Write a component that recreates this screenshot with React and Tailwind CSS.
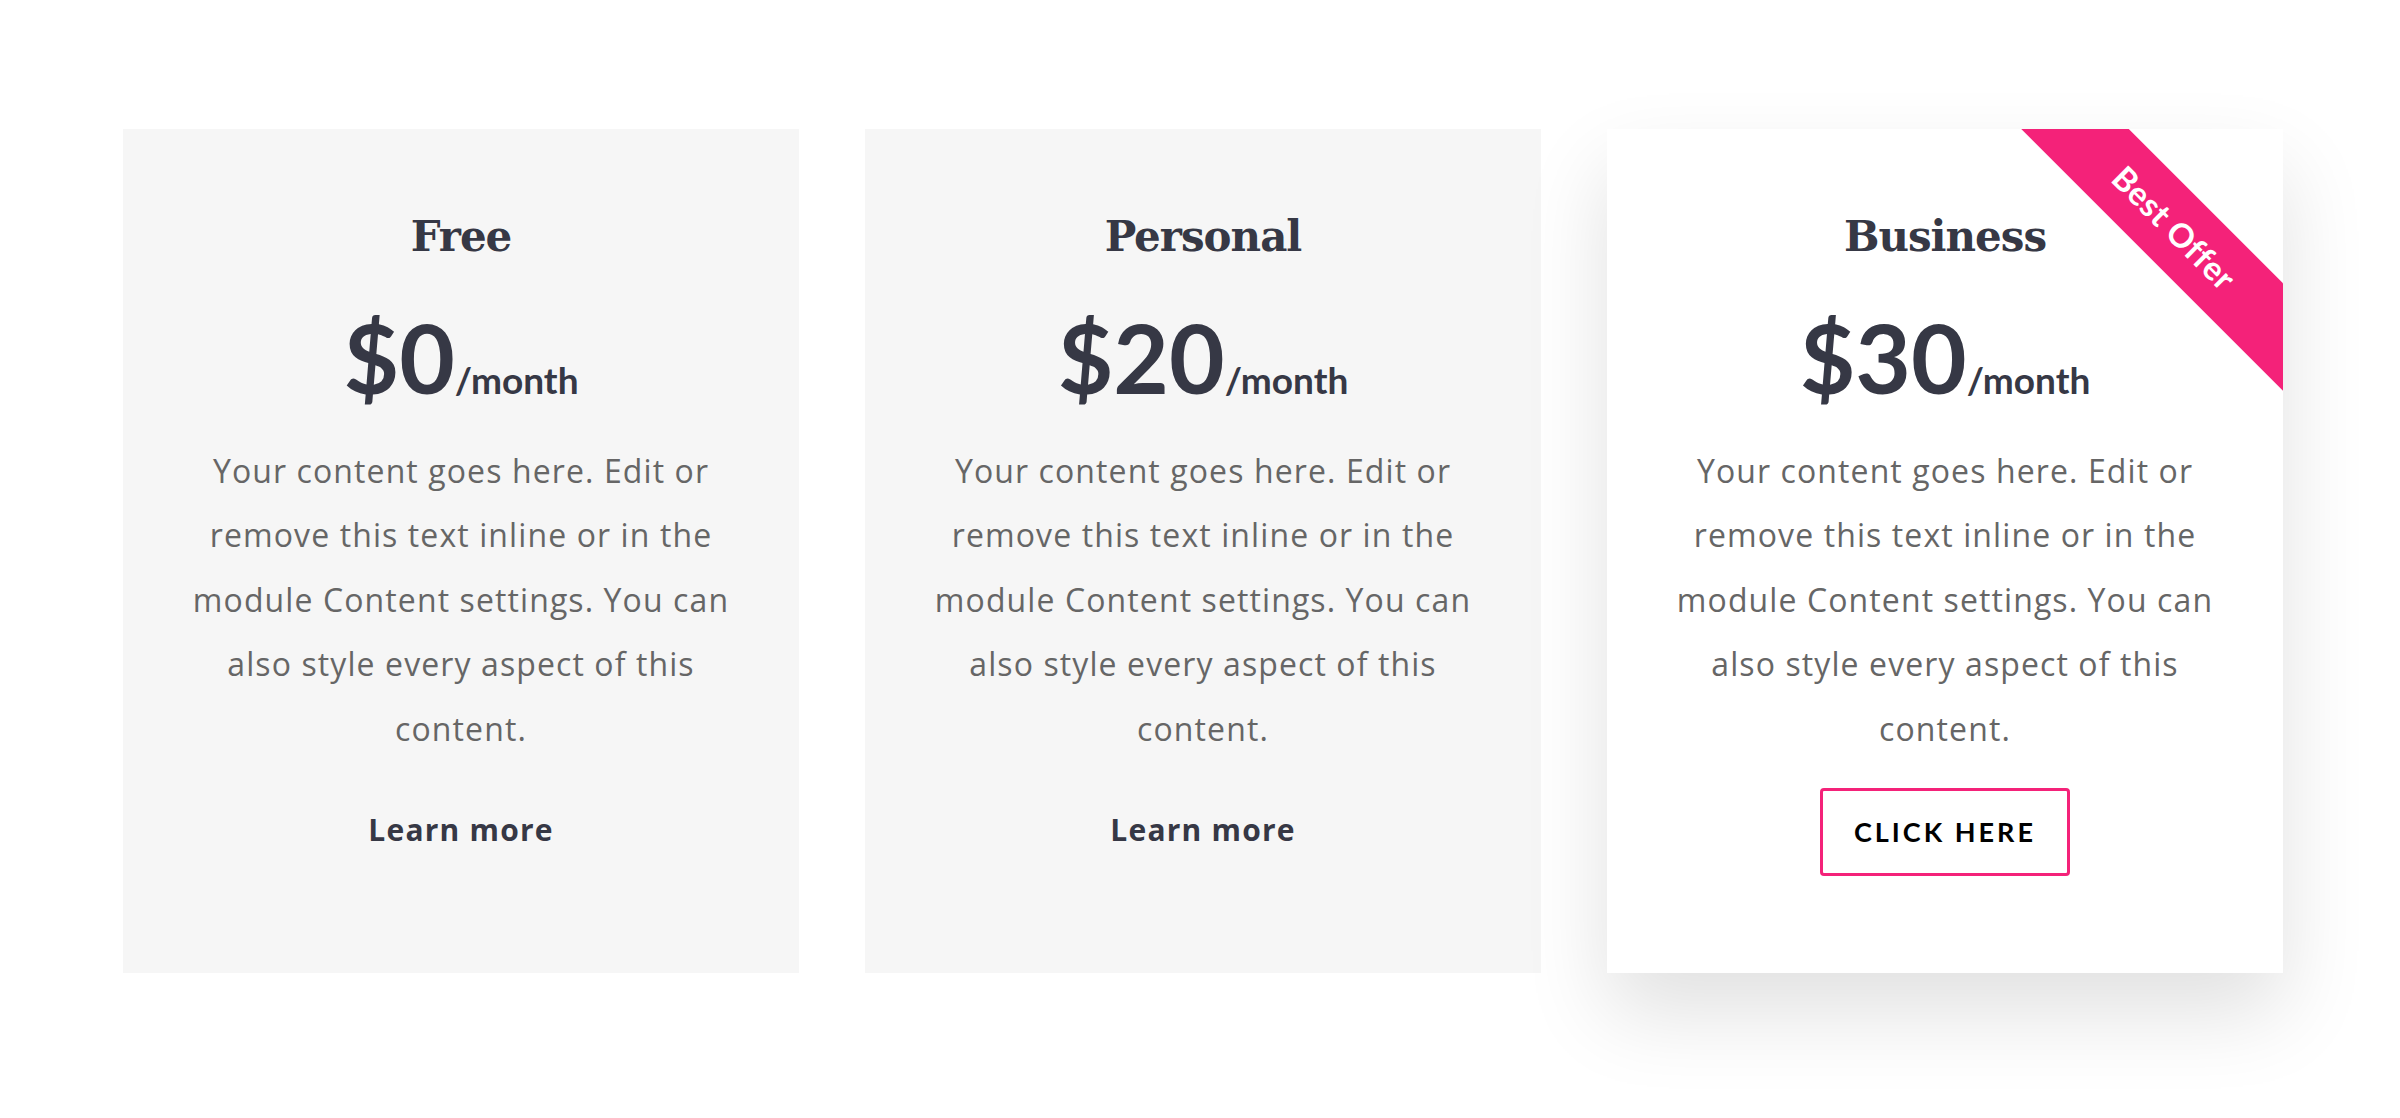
const plans = [
  { name: "Free", price: "$0" },
  { name: "Personal", price: "$20" },
  { name: "Business", price: "$30", featured: true },
];

const body =
  "Your content goes here. Edit or remove this text inline or in the module Content settings. You can also style every aspect of this content.";

const PlanCard = ({ plan }) => (
  <div
    className={
      plan.featured
        ? "relative overflow-hidden h-[844px] bg-white shadow-[0_40px_80px_rgba(0,0,0,0.12)]"
        : "relative overflow-hidden h-[844px] bg-[#f6f6f6]"
    }
  >
    {plan.featured && (
      <div className="absolute left-[337px] top-[61px] w-[460px] h-[76px] rotate-45 bg-[#f42279] flex items-center justify-center">
        <span className="text-white text-[33px] font-bold font-['Lato',sans-serif] tracking-[0.5px]">
          Best Offer
        </span>
      </div>
    )}
    <div className="flex flex-col items-center pt-[78px] px-[60px]">
      <h2 className="text-[42px] leading-[60px] font-bold text-[#363845] font-['DejaVu_Serif',serif] tracking-[-1px]">
        {plan.name}
      </h2>
      <div className="mt-[40px] flex items-baseline text-[#363845] font-['Lato',sans-serif]">
        <span className="text-[96px] leading-[100px] font-bold">{plan.price}</span>
        <span className="text-[37px] font-bold">/month</span>
      </div>
      <p className="mt-[31px] max-w-[570px] text-center text-[32px] leading-[64.5px] tracking-[1.1px] text-[#666] font-['Open_Sans',sans-serif]">
        {body}
      </p>
      {plan.featured ? (
        <button className="mt-[27px] w-[250px] h-[88px] border-[3px] border-[#f42279] rounded-[4px] text-[27px] font-bold tracking-[3px] text-black font-['Lato',sans-serif]">
          CLICK HERE
        </button>
      ) : (
        <a className="mt-[46px] text-[30px] font-bold text-[#363845] font-['Open_Sans',sans-serif] tracking-[1.2px]">
          Learn more
        </a>
      )}
    </div>
  </div>
);

export default function App() {
  return (
    <div className="min-h-[1118px] bg-white pt-[129px] pl-[123px] pr-[117px]">
      <div className="grid grid-cols-3 gap-[66px]">
        {plans.map((p) => (
          <PlanCard key={p.name} plan={p} />
        ))}
      </div>
    </div>
  );
}
